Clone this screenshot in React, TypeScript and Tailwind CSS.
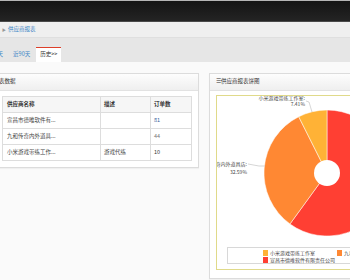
import React from "react";

const rows = [
  { name: "宣昌市德唯软件有...", desc: "", count: "81", countCls: "text-[#3b5e9c]" },
  { name: "九和传奇内外道具...", desc: "", count: "44", countCls: "text-[#777]" },
  { name: "小米游戏带练工作...", desc: "游戏代练", count: "10", countCls: "text-[#333]" },
];

function PieChart() {
  return (
    <div className="relative w-[280px] h-[175px] border border-[#e0da8a] bg-white overflow-hidden shrink-0">
      <svg width="278" height="173" className="absolute left-0 top-0" style={{ overflow: "visible" }}>
        <path d="M110 77 L110 14 A63 63 0 1 1 72.97 127.97 Z" fill="#ff3f33" stroke="#fff" strokeWidth="0.5" />
        <path d="M110 77 L72.97 127.97 A63 63 0 0 1 81.72 20.7 Z" fill="#ff8833" stroke="#fff" strokeWidth="0.5" />
        <path d="M110 77 L81.72 20.7 A63 63 0 0 1 110 14 Z" fill="#ffb236" stroke="#fff" strokeWidth="0.5" />
        <circle cx="110" cy="77" r="13" fill="#fff" />
        <polyline points="89,5 92,6 95,16" fill="none" stroke="#bbb" strokeWidth="0.6" />
        <polyline points="31,68 42,70 48,70" fill="none" stroke="#bbb" strokeWidth="0.6" />
        <text x="88" y="3.5" textAnchor="end" fontSize="5" fill="#444" fontFamily="'Noto Sans CJK SC', sans-serif">小米游戏带练工作室:</text>
        <text x="88" y="9.5" textAnchor="end" fontSize="5" fill="#444" fontFamily="'Noto Sans CJK SC', sans-serif">7.41%</text>
        <text x="30" y="70" textAnchor="end" fontSize="5" fill="#444" fontFamily="'Noto Sans CJK SC', sans-serif">九和传奇内外道具店:</text>
        <text x="30" y="77.5" textAnchor="end" fontSize="5" fill="#444" fontFamily="'Noto Sans CJK SC', sans-serif">32.59%</text>
      </svg>
      <div className="absolute left-[10px] top-[151px] w-[260px] h-[17px] border border-[#d8d8d8] bg-white pl-[35px] pt-[1px] text-[5px] leading-[6px] text-[#444]">
        <div className="flex h-[7px] items-center">
          <div className="flex w-[74px] items-center gap-[2px]">
            <span className="inline-block w-[5px] h-[6px] bg-[#ffb236]" />
            <span>小米游戏带练工作室</span>
          </div>
          <div className="flex items-center gap-[2px]">
            <span className="inline-block w-[5px] h-[6px] bg-[#ff8833]" />
            <span>九和传奇内外道具店</span>
          </div>
        </div>
        <div className="flex h-[8px] items-center">
          <div className="flex items-center gap-[2px]">
            <span className="inline-block w-[5px] h-[6px] bg-[#ff3f33]" />
            <span>宣昌市德唯软件有限责任公司</span>
          </div>
        </div>
      </div>
    </div>
  );
}

export default function App() {
  return (
    <div className="w-[350px] h-[280px] overflow-hidden bg-[#fafafa] font-['Noto_Sans_CJK_SC',_'Noto_Sans',_sans-serif] text-[5.5px] leading-none">
      {/* top bar */}
      <div className="h-[22px] border-t border-[#b5b5b5] border-b border-b-[#4a4a4a] bg-gradient-to-b from-[#141414] to-[#242424]" />
      {/* breadcrumb */}
      <div className="h-[16px] bg-[#efefef] border-b border-[#dfdfdf] flex items-center pl-[2px] gap-[2px]">
        <span className="text-[#999] text-[4px]">▶</span>
        <span className="text-[#3d86c6]">供应商报表</span>
      </div>
      {/* tabs */}
      <div className="h-[24px] bg-[#e6e6e6] flex items-end gap-[2px]">
        <div className="ml-[-18px] h-[15px] px-[4px] flex items-center text-[#3d86c6]">近30天</div>
        <div className="h-[15px] px-[4px] flex items-center text-[#3d86c6]">近90天</div>
        <div className="h-[15px] px-[4px] flex items-center bg-white border-t border-[#dd3f2a] text-[#333]">历史&gt;&gt;</div>
      </div>
      {/* content */}
      <div className="flex gap-[10px] pt-[11px]">
        <div className="ml-[-5px] w-[204px] shrink-0 h-[95px] bg-white border border-[#dcdcdc] shadow-[0_1px_1px_rgba(0,0,0,0.04)]">
          <div className="h-[17px] bg-gradient-to-b from-[#fdfdfd] to-[#efefef] border-b border-[#e2e2e2] flex items-center text-[#333] overflow-hidden">
            <span className="ml-[-24px] whitespace-nowrap">☰供应商报表数据</span>
          </div>
          <div className="px-[6px] pt-[5px]">
            <table className="w-[190px] border-collapse border border-[#dddddd] text-[#444]">
              <thead>
                <tr className="h-[16px] bg-[#f6f6f6]">
                  <th className="w-[98px] border border-[#dddddd] text-left pl-[4px] font-bold text-[#333]">供应商名称</th>
                  <th className="w-[50px] border border-[#dddddd] text-left pl-[3px] font-bold text-[#333]">描述</th>
                  <th className="border border-[#dddddd] text-left pl-[3px] font-bold text-[#333]">订单数</th>
                </tr>
              </thead>
              <tbody>
                {rows.map((r) => (
                  <tr key={r.name} className="h-[16px]">
                    <td className="border border-[#dddddd] pl-[4px]">{r.name}</td>
                    <td className="border border-[#dddddd] pl-[3px]">{r.desc}</td>
                    <td className={"border border-[#dddddd] pl-[3px] " + r.countCls}>{r.count}</td>
                  </tr>
                ))}
              </tbody>
            </table>
          </div>
        </div>
        <div className="w-[300px] shrink-0 h-[206px] bg-white border border-[#dcdcdc] shadow-[0_1px_1px_rgba(0,0,0,0.04)]">
          <div className="h-[17px] bg-gradient-to-b from-[#fdfdfd] to-[#efefef] border-b border-[#e2e2e2] flex items-center pl-[6px] text-[#333] whitespace-nowrap">
            ☰供应商报表饼图
          </div>
          <div className="pl-[6px] pt-[4px]">
            <PieChart />
          </div>
        </div>
      </div>
    </div>
  );
}
